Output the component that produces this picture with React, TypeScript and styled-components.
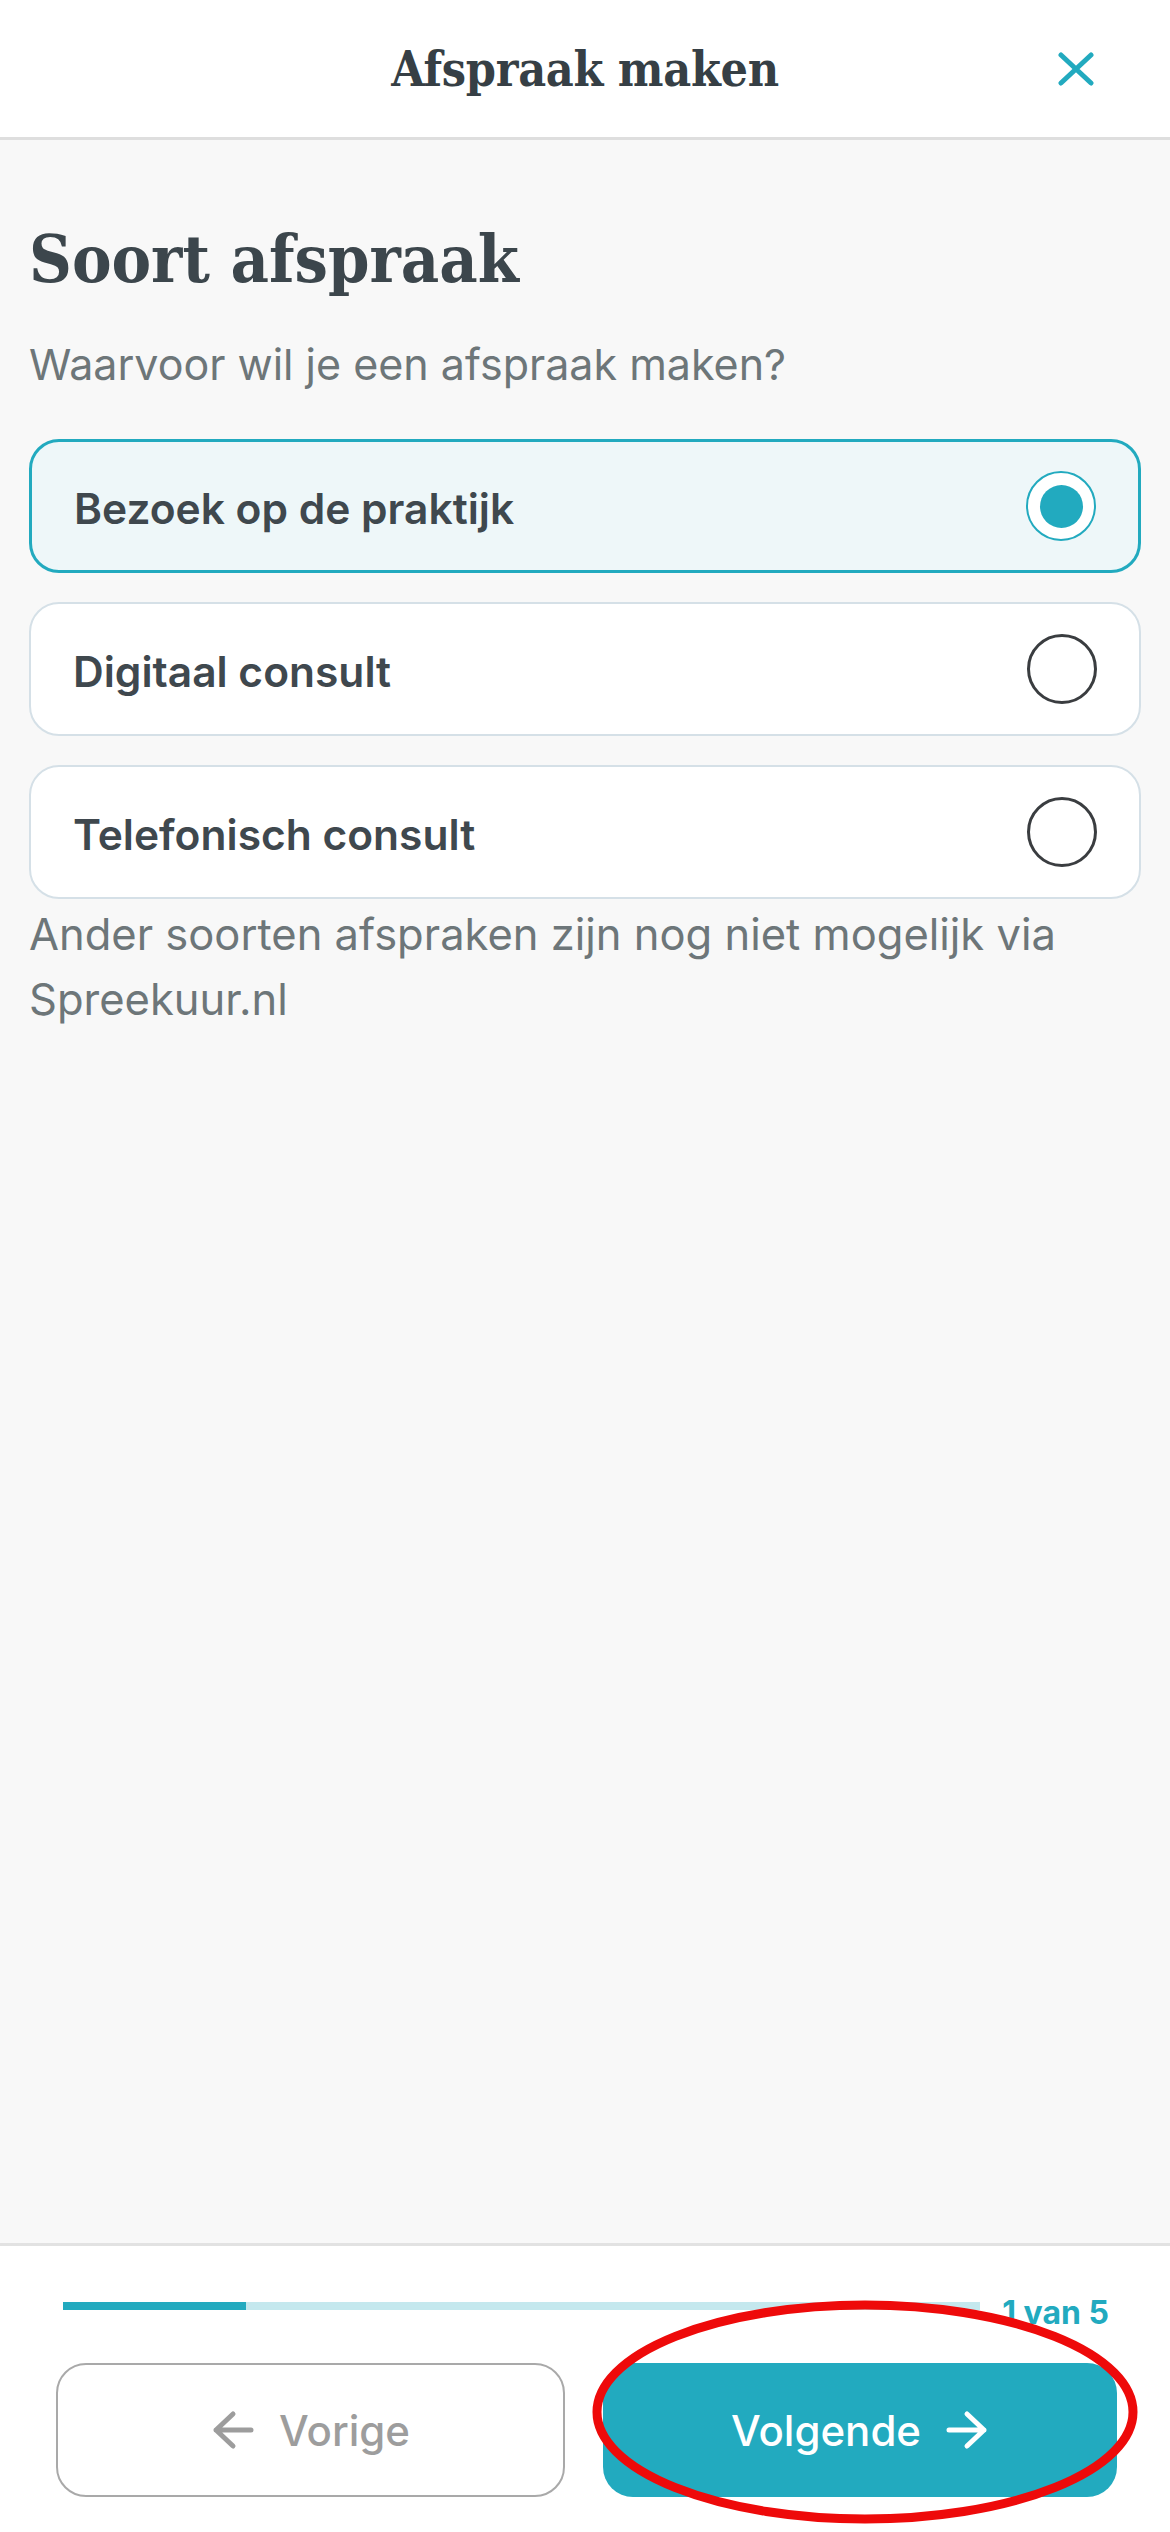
import React, { useState } from 'react';
import styled, { createGlobalStyle, css } from 'styled-components';

const teal = '#22aabf';

const GlobalStyle = createGlobalStyle`
    html, body {
        margin: 0;
        padding: 0;
        background: #f8f8f8;
    }
    * { box-sizing: border-box; }
`;

const Page = styled.div`
    min-height: 2532px;
    display: flex;
    flex-direction: column;
    font-family: Inter, "Noto Sans", sans-serif;
    color: #3c464c;
`;

const Header = styled.header`
    height: 140px;
    background: #ffffff;
    border-bottom: 3px solid #dedede;
    display: grid;
    grid-template-columns: 1fr auto 1fr;
    align-items: center;
`;

const SerifText = css`
    font-family: "DejaVu Serif Condensed", "DejaVu Serif", "Liberation Serif", serif;
    font-stretch: condensed;
    font-weight: 700;
    color: #363f45;
`;

const HeaderTitle = styled.h1`
    ${SerifText};
    grid-column: 2;
    margin: 0;
    font-size: 48px;
    letter-spacing: -0.3px;
`;

const CloseButton = styled.button`
    justify-self: end;
    width: 60px;
    height: 60px;
    margin-right: 64px;
    border: none;
    background: none;
    padding: 0;
    display: flex;
    align-items: center;
    justify-content: center;
`;

const Main = styled.main`
    flex: 1;
    background: #f8f8f8;
    padding: 80px 29px 0;
`;

const Title = styled.h2`
    ${SerifText};
    margin: 0;
    font-size: 66px;
    line-height: 1.2;
    color: #3c464c;
`;

const Subtitle = styled.p`
    margin: 36px 0 46px;
    font-size: 43px;
    line-height: 58px;
    color: #6d7679;
`;

const Options = styled.div`
    display: flex;
    flex-direction: column;
    gap: 29px;
`;

const OptionCard = styled.label<{ $selected: boolean }>`
    height: 134px;
    display: flex;
    align-items: center;
    justify-content: space-between;
    padding: 4px 42px 0 42px;
    border-radius: 30px;
    cursor: pointer;
    background: ${p => (p.$selected ? '#eef7f9' : '#ffffff')};
    border: ${p => (p.$selected ? `3px solid ${teal}` : '2px solid #d5e0e7')};
`;

const OptionLabel = styled.span`
    font-size: 42.5px;
    font-weight: 600;
    color: #3f484e;
`;

const Radio = styled.span<{ $selected: boolean }>`
    width: 70px;
    height: 70px;
    margin-top: -4px;
    border-radius: 50%;
    display: flex;
    align-items: center;
    justify-content: center;
    background: #ffffff;
    border: ${p => (p.$selected ? `2.5px solid ${teal}` : '3px solid #3a3d40')};

    &::after {
        content: '';
        width: 43px;
        height: 43px;
        border-radius: 50%;
        background: ${teal};
        display: ${p => (p.$selected ? 'block' : 'none')};
    }
`;

const Note = styled.p`
    margin: 3px 0 0;
    font-size: 43.5px;
    line-height: 65px;
    color: #6d7679;
`;

const Footer = styled.footer`
    position: relative;
    background: #ffffff;
    border-top: 3px solid #e2e2e2;
    padding: 40px 53px 35px 56px;
    display: flex;
    flex-direction: column;
    gap: 37px;
`;

const ProgressRow = styled.div`
    height: 40px;
    display: flex;
    align-items: center;
    gap: 22px;
    padding: 0 8px 0 7px;
`;

const ProgressTrack = styled.div`
    flex: 1;
    height: 8px;
    background: #c4e8ee;
`;

const ProgressFill = styled.div`
    height: 100%;
    background: ${teal};
`;

const StepText = styled.span`
    font-size: 32px;
    font-weight: 700;
    color: ${teal};
    margin-top: 12px;
`;

const ButtonRow = styled.div`
    display: grid;
    grid-template-columns: 509px 514px;
    justify-content: space-between;
`;

const NavButton = styled.button<{ $primary?: boolean }>`
    height: 134px;
    border-radius: 30px;
    display: flex;
    align-items: center;
    justify-content: center;
    gap: 24px;
    font-family: Inter, "Noto Sans", sans-serif;
    font-size: 42px;
    font-weight: 500;
    ${p =>
        p.$primary
            ? css`
                  background: ${teal};
                  color: #ffffff;
                  border: none;
              `
            : css`
                  background: #ffffff;
                  color: #9d9d9d;
                  border: 2px solid #a9a9a9;
              `}
`;

const Highlight = styled.svg`
    position: absolute;
    left: 592px;
    top: 54px;
    pointer-events: none;
`;

const CloseIcon = () => (
    <svg width="36" height="34" viewBox="0 0 36 34">
        <path d="M3 3 L33 31 M33 3 L3 31" stroke={teal} strokeWidth="5" strokeLinecap="round" />
    </svg>
);

const Arrow = ({ dir, color }: { dir: 'left' | 'right'; color: string }) => (
    <svg width="44" height="40" viewBox="0 0 44 40" style={{ transform: dir === 'left' ? 'scaleX(-1)' : undefined }}>
        <path
            d="M4 20 H39 M22 4 L39 20 L22 36"
            fill="none"
            stroke={color}
            strokeWidth="5"
            strokeLinecap="round"
            strokeLinejoin="round"
        />
    </svg>
);

const options = ['Bezoek op de praktijk', 'Digitaal consult', 'Telefonisch consult'];

export default function App() {
    const [selected, setSelected] = useState(0);
    const step = 1;
    const total = 5;

    return (
        <Page>
            <GlobalStyle />
            <Header>
                <HeaderTitle>Afspraak maken</HeaderTitle>
                <CloseButton aria-label="Sluiten">
                    <CloseIcon />
                </CloseButton>
            </Header>

            <Main>
                <Title>Soort afspraak</Title>
                <Subtitle>Waarvoor wil je een afspraak maken?</Subtitle>
                <Options>
                    {options.map((label, i) => (
                        <OptionCard key={label} $selected={selected === i} onClick={() => setSelected(i)}>
                            <OptionLabel>{label}</OptionLabel>
                            <Radio $selected={selected === i} />
                        </OptionCard>
                    ))}
                </Options>
                <Note>Ander soorten afspraken zijn nog niet mogelijk via Spreekuur.nl</Note>
            </Main>

            <Footer>
                <ProgressRow>
                    <ProgressTrack>
                        <ProgressFill style={{ width: `${(step / total) * 100}%` }} />
                    </ProgressTrack>
                    <StepText>
                        {step} van {total}
                    </StepText>
                </ProgressRow>
                <ButtonRow>
                    <NavButton>
                        <Arrow dir="left" color="#9d9d9d" />
                        Vorige
                    </NavButton>
                    <NavButton $primary>
                        Volgende
                        <Arrow dir="right" color="#ffffff" />
                    </NavButton>
                </ButtonRow>
                <Highlight width="546" height="224" viewBox="0 0 546 224">
                    <ellipse cx="273" cy="112" rx="268" ry="107" fill="none" stroke="#ee0a0a" strokeWidth="9" />
                </Highlight>
            </Footer>
        </Page>
    );
}
